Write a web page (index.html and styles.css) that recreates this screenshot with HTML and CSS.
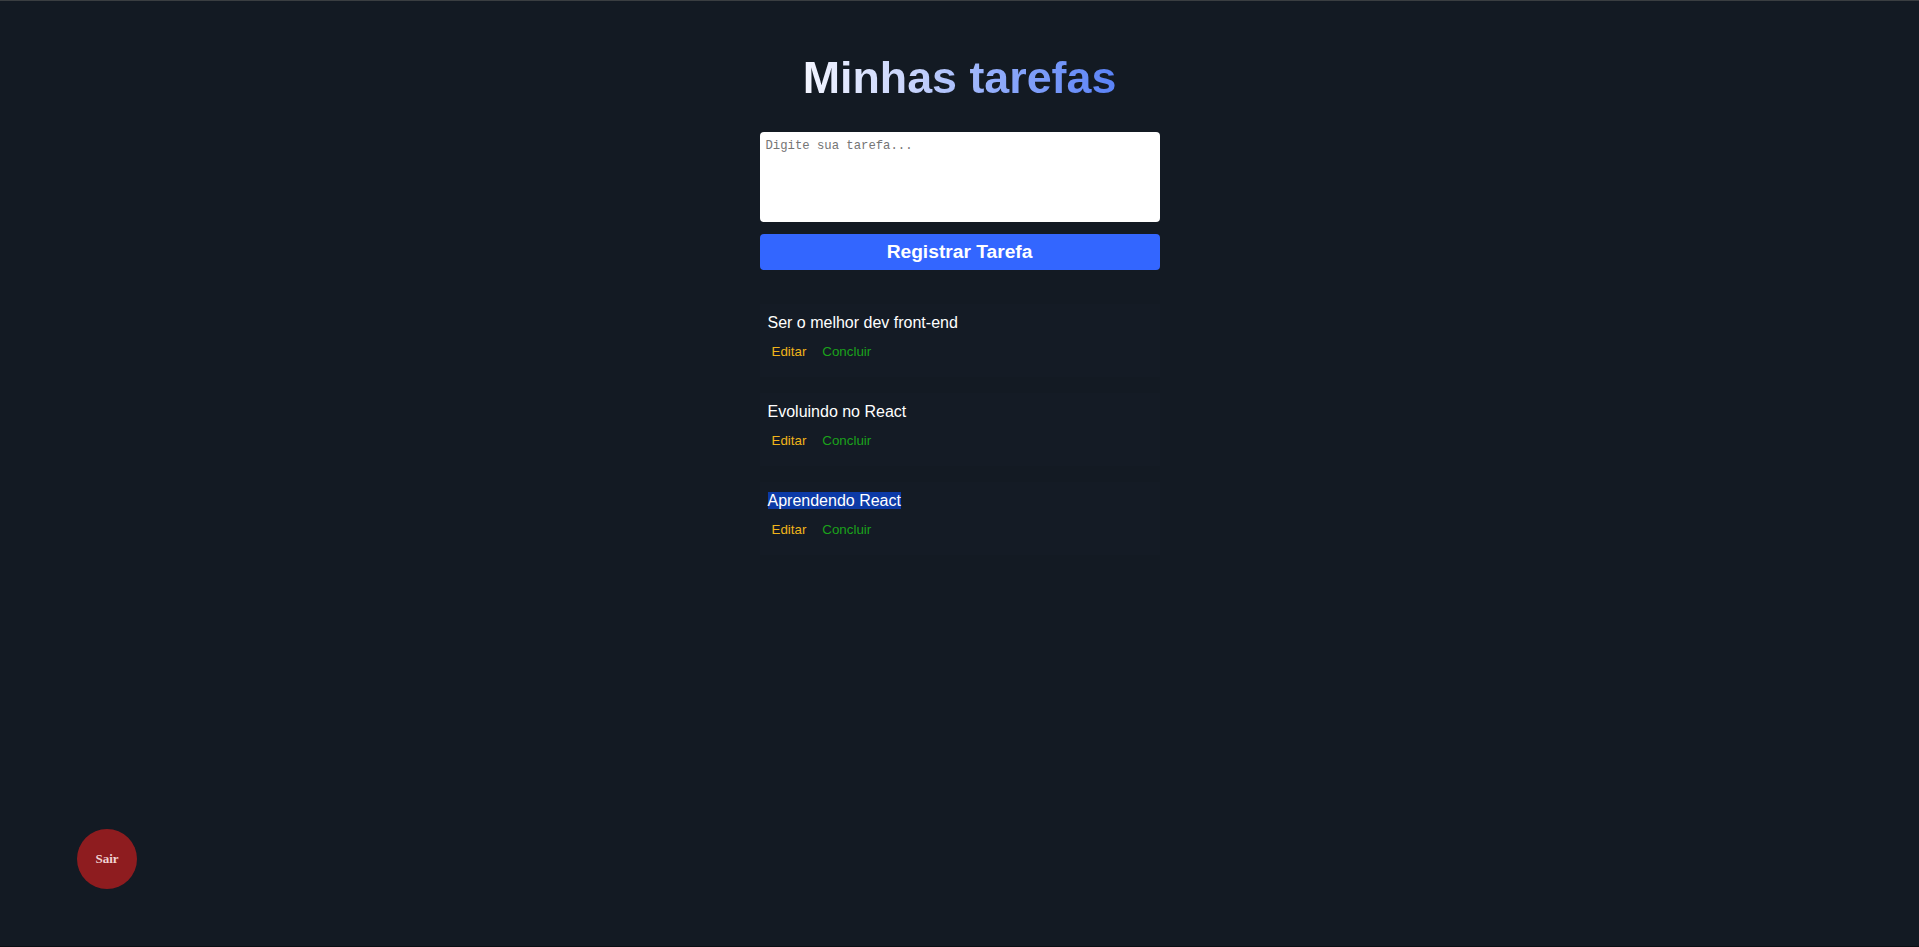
FILE: index.html
```html
<!DOCTYPE html>
<html lang="pt-BR">
<head>
<meta charset="utf-8">
<title>Minhas tarefas</title>
<link rel="stylesheet" href="styles.css">
</head>
<body>
  <main class="container">
    <h1 class="title"><span class="title-text">Minhas tarefas</span></h1>
    <form class="form">
      <textarea class="input" placeholder="Digite sua tarefa..."></textarea>
      <button type="button" class="btn-register">Registrar Tarefa</button>
    </form>
    <section class="tasks">
      <article class="task">
        <p class="task-text">Ser o melhor dev front-end</p>
        <div class="task-actions">
          <button type="button" class="btn-edit">Editar</button>
          <button type="button" class="btn-done">Concluir</button>
        </div>
      </article>
      <article class="task">
        <p class="task-text">Evoluindo no React</p>
        <div class="task-actions">
          <button type="button" class="btn-edit">Editar</button>
          <button type="button" class="btn-done">Concluir</button>
        </div>
      </article>
      <article class="task">
        <p class="task-text"><span class="selected">Aprendendo React</span></p>
        <div class="task-actions">
          <button type="button" class="btn-edit">Editar</button>
          <button type="button" class="btn-done">Concluir</button>
        </div>
      </article>
    </section>
  </main>
  <button type="button" class="btn-logout">Sair</button>
</body>
</html>
```
FILE: styles.css
```css
html {
  background: #131a23;
}
body {
  margin: 0;
  min-height: 100vh;
  box-sizing: border-box;
  background: #131a23;
  border-top: 1px solid #3a3e41;
  border-bottom: 1px solid #0a0e13;
  font-family: "Liberation Sans", Arial, sans-serif;
  color: #fff;
}
.container {
  width: 400px;
  margin: 0 auto;
  padding-top: 50px;
  display: flex;
  flex-direction: column;
}
.title {
  margin: 0;
  text-align: center;
  font-size: 44.8px;
  font-weight: 700;
  line-height: 52px;
}
.title-text {
  display: inline-block;
  background: linear-gradient(to right, #f3f5ff 0%, #c7d3fb 35%, #8aa7fb 65%, #5a82f6 100%);
  -webkit-background-clip: text;
  background-clip: text;
  color: transparent;
}
.form {
  margin-top: 29px;
  display: flex;
  flex-direction: column;
  gap: 12px;
}
.input {
  box-sizing: border-box;
  width: 100%;
  height: 90px;
  border: 0;
  border-radius: 4px;
  padding: 7px 6px 6px;
  resize: none;
  background: #fff;
  font-family: "Liberation Mono", "DejaVu Sans Mono", monospace;
  font-size: 12.25px;
  color: #222;
  outline: none;
}
.input::placeholder {
  color: #757575;
}
.btn-register {
  height: 36px;
  border: 0;
  border-radius: 4px;
  padding: 0 0 1px;
  background: #3366ff;
  color: #fff;
  font-family: "Liberation Sans", Arial, sans-serif;
  font-size: 19.2px;
  font-weight: 700;
  cursor: pointer;
}
.tasks {
  margin-top: 34px;
  display: flex;
  flex-direction: column;
  gap: 16px;
}
.task {
  background: #141b25;
  padding: 10px 8px 16px;
}
.task-text {
  margin: 0;
  font-size: 16px;
  line-height: 18px;
  color: #fff;
}
.selected {
  background: #0c3aa6;
}
.task-actions {
  margin-top: 10px;
  display: flex;
  gap: 8px;
}
.task-actions button {
  border: 0;
  background: transparent;
  padding: 2px 4px;
  font-family: "Liberation Sans", Arial, sans-serif;
  font-size: 13.33px;
  line-height: 15px;
  cursor: pointer;
}
.btn-edit {
  color: #f0b41a;
}
.btn-done {
  color: #1ba21b;
}
.btn-logout {
  position: fixed;
  left: 77px;
  bottom: 58px;
  width: 60px;
  height: 60px;
  border: 0;
  border-radius: 50%;
  background: #8e1c1f;
  color: #f0d3d3;
  font-family: "Liberation Serif", "Times New Roman", serif;
  font-weight: 700;
  font-size: 13px;
  cursor: pointer;
}
```
